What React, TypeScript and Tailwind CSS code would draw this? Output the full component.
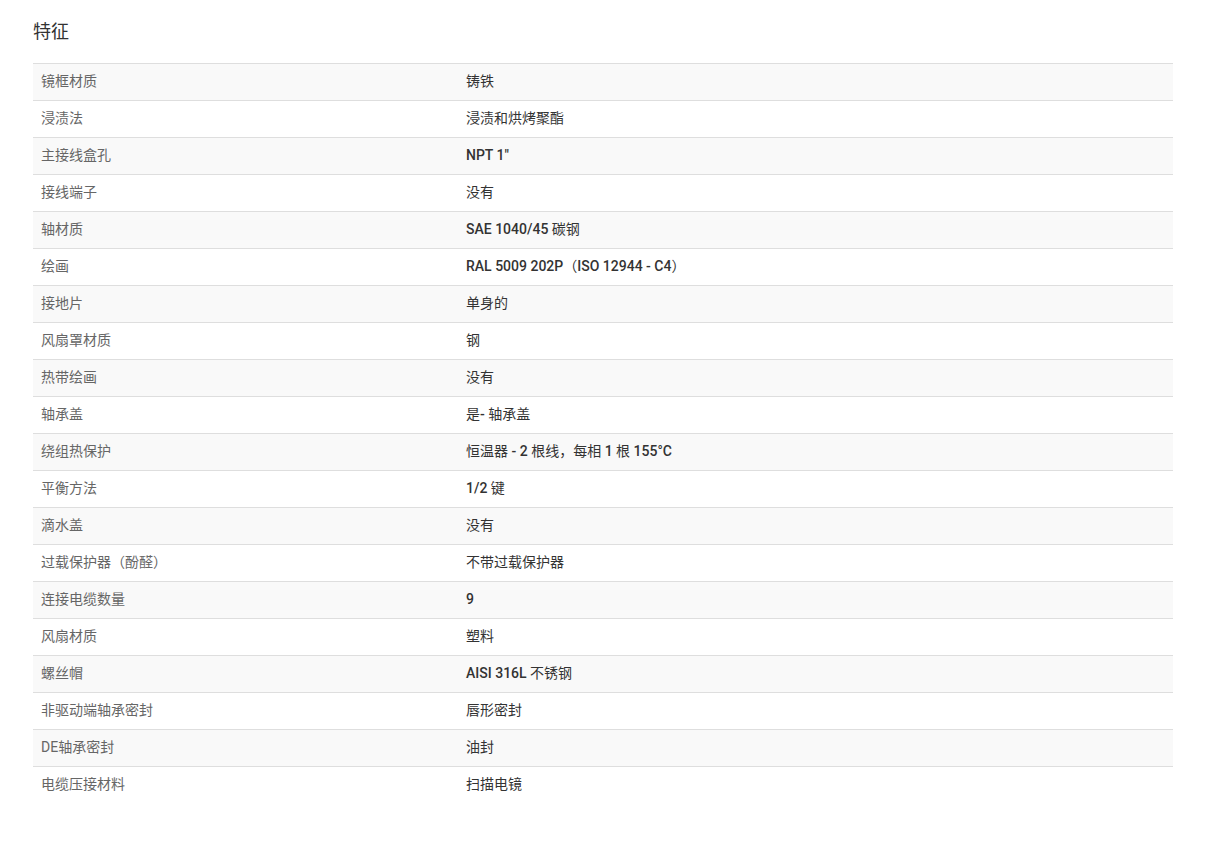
const rows: [string, string][] = [
  ["镜框材质", "铸铁"],
  ["浸渍法", "浸渍和烘烤聚酯"],
  ["主接线盒孔", "NPT 1\""],
  ["接线端子", "没有"],
  ["轴材质", "SAE 1040/45 碳钢"],
  ["绘画", "RAL 5009 202P（ISO 12944 - C4）"],
  ["接地片", "单身的"],
  ["风扇罩材质", "钢"],
  ["热带绘画", "没有"],
  ["轴承盖", "是- 轴承盖"],
  ["绕组热保护", "恒温器 - 2 根线，每相 1 根 155°C"],
  ["平衡方法", "1/2 键"],
  ["滴水盖", "没有"],
  ["过载保护器（酚醛）", "不带过载保护器"],
  ["连接电缆数量", "9"],
  ["风扇材质", "塑料"],
  ["螺丝帽", "AISI 316L 不锈钢"],
  ["非驱动端轴承密封", "唇形密封"],
  ["DE轴承密封", "油封"],
  ["电缆压接材料", "扫描电镜"],
];

// latin runs are medium weight, CJK stays regular
const Value = ({ text }: { text: string }) => {
  const parts = text.split(/([\u3000-\u9fff\uff00-\uffef]+)/);
  return (
    <>
      {parts.map((p, i) =>
        /[\u3000-\u9fff\uff00-\uffef]/.test(p) ? (
          <span key={i}>{p}</span>
        ) : (
          <span key={i} className="font-medium">
            {p}
          </span>
        )
      )}
    </>
  );
};

export default function App() {
  return (
    <div className="min-h-[851px] bg-white px-[33px] pt-[19px] font-['Roboto','Noto_Sans_CJK_SC',sans-serif]">
      <h2 className="text-[18px] leading-[26px] text-[#333]">特征</h2>
      <div className="mt-[18px] w-[1140px]">
        {rows.map(([label, value], i) => (
          <div
            key={label}
            className={`flex h-[37px] items-center border-t border-[#dedede] pb-[2px] text-[14px] ${
              i % 2 === 0 ? "bg-[#f9f9f9]" : "bg-white"
            }`}
          >
            <div className="w-[425px] pl-2 text-[#666]">{label}</div>
            <div className="flex-1 pl-2 text-[#333]">
              <Value text={value} />
            </div>
          </div>
        ))}
      </div>
    </div>
  );
}
